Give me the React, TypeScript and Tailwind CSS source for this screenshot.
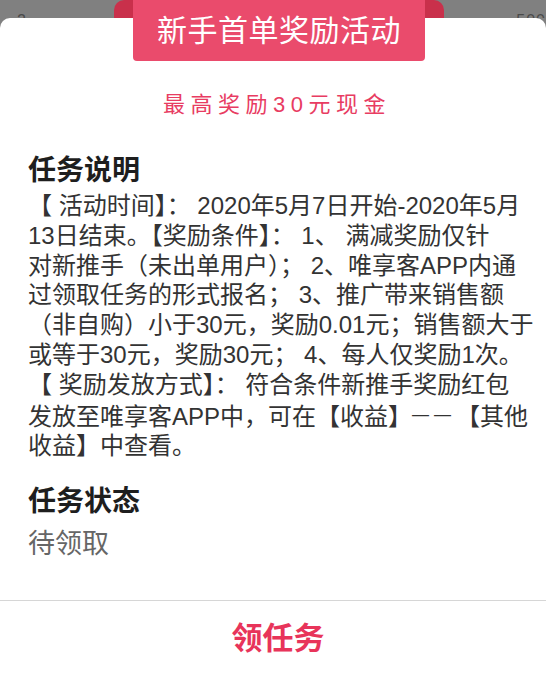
import React from "react";

const lines: React.ReactNode[] = [
  "【 活动时间】： 2020年5月7日开始-2020年5月",
  "13日结束。【奖励条件】： 1、 满减奖励仅针",
  "对新推手（未出单用户）； 2、唯享客APP内通",
  "过领取任务的形式报名； 3、推广带来销售额",
  "（非自购）小于30元，奖励0.01元；销售额大于",
  "或等于30元，奖励30元； 4、每人仅奖励1次。",
  "【 奖励发放方式】： 符合条件新推手奖励红包",
  <>
    发放至唯享客APP中，可在【收益】<span className="text-[17px] tracking-[5px] align-[5px]">——</span>【其他
  </>,
  "收益】中查看。",
];

export default function App() {
  return (
    <div
      className="relative w-[546px] h-[678px] overflow-hidden bg-[#808080]"
      style={{ fontFamily: '"Liberation Sans", "Noto Sans CJK SC", sans-serif' }}
    >
      {/* page content behind the mask */}
      <div className="h-[18px] overflow-hidden flex justify-between pl-[17px]">
        <span className="pt-[13px] text-[16px] leading-none text-[#4a4a4a]">2</span>
        <span className="pt-[13px] text-[16px] leading-none text-[#4a4a4a] tracking-[1px]">500</span>
      </div>

      {/* ribbon ears, behind the card */}
      <div className="absolute top-0 left-[114px] w-[330px] h-[26px] bg-[#c9304b] rounded-t-[10px]" />

      {/* card */}
      <div className="relative h-[660px] bg-white rounded-t-[10px] flex flex-col">
        <div className="pt-[72px] pl-[8px] text-center text-[22px] leading-[30px] tracking-[5.5px] text-[#e83c62]">
          最高奖励30元现金
        </div>

        <div className="px-[28px]">
          <div className="mt-[34px] text-[28px] leading-[34px] font-bold text-[#1e1e1e]">任务说明</div>
          <div className="mt-[3px] text-[24px] leading-[29.8px] text-[#333333]">
            {lines.map((l, i) => (
              <div key={i} className="whitespace-nowrap">
                {l}
              </div>
            ))}
          </div>
          <div className="mt-[24px] text-[28px] leading-[34px] font-bold text-[#1e1e1e]">任务状态</div>
          <div className="mt-[8px] text-[27px] leading-[34px] text-[#666666]">待领取</div>
        </div>

        <div className="flex-1" />
        <div className="h-[1px] bg-[#d6d6d6]" />
        <button className="h-[77px] w-full flex items-center justify-center pl-[10px] text-[31px] font-bold text-[#e8345a] bg-white">
          领任务
        </button>
      </div>

      {/* banner on top of the card */}
      <div className="absolute top-0 left-[133px] w-[292px] h-[61px] bg-[#ea4b6c] rounded-b-[4px] flex items-center justify-center">
        <span className="text-[30px] leading-none text-white tracking-[0.5px]">新手首单奖励活动</span>
      </div>
    </div>
  );
}
